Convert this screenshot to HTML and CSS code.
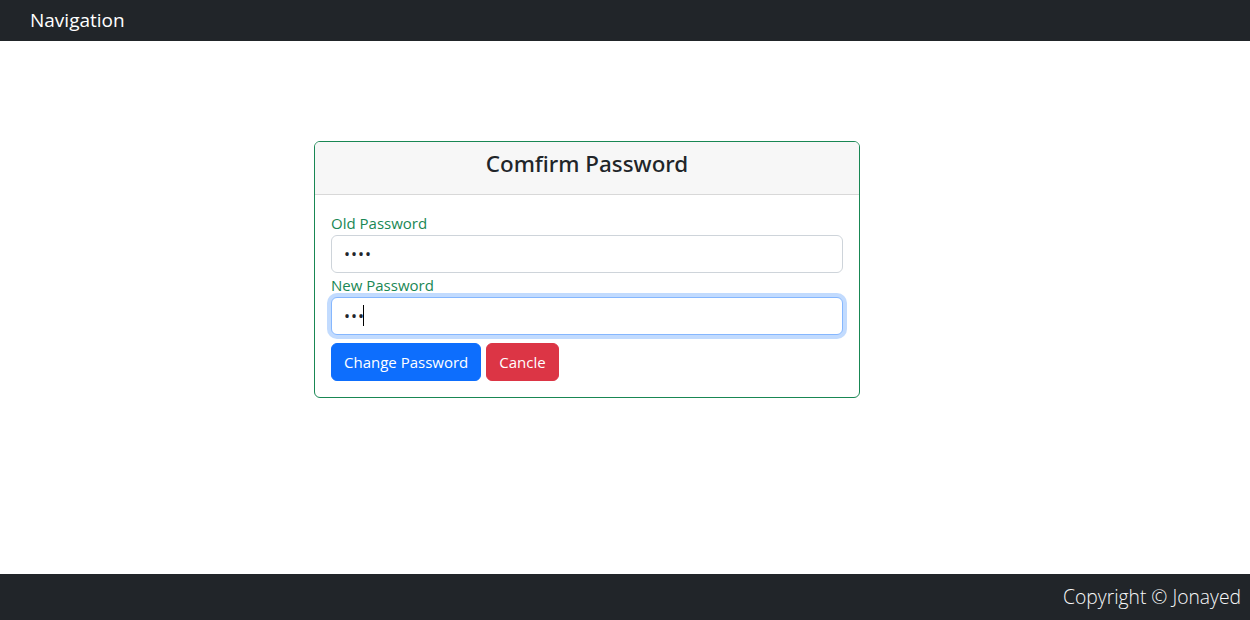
FILE: index.html
```html
<!DOCTYPE html>
<html lang="en">
<head>
<meta charset="utf-8">
<title>Comfirm Password</title>
<link rel="stylesheet" href="styles.css">
</head>
<body>
<div class="page">
  <nav class="navbar">
    <span class="brand">Navigation</span>
  </nav>
  <main class="main">
    <div class="card">
      <div class="card-header">
        <h3 class="card-title">Comfirm Password</h3>
      </div>
      <div class="card-body">
        <label class="label" for="old">Old Password</label>
        <input class="input" id="old" type="password" value="1234">
        <label class="label" for="new">New Password</label>
        <div class="field">
          <input class="input input-focus" id="new" type="password" value="123">
          <span class="caret"></span>
        </div>
        <div class="actions">
          <button class="btn btn-primary" type="button">Change Password</button>
          <button class="btn btn-danger" type="button">Cancle</button>
        </div>
      </div>
    </div>
  </main>
  <footer class="footer">
    <span class="copy">Copyright © Jonayed</span>
  </footer>
</div>
</body>
</html>
```

FILE: styles.css
```css
* { box-sizing: border-box; }
html, body { margin: 0; padding: 0; }
body {
  font-family: "Open Sans", "Noto Sans", "Liberation Sans", sans-serif;
  font-size: 16px;
  line-height: 1.5;
  color: #212529;
  background: #fff;
}
.page {
  display: flex;
  flex-direction: column;
  height: 620px;
}
.navbar {
  background: #212529;
  height: 41px;
  display: flex;
  align-items: center;
  padding-left: 30px;
  flex: none;
}
.brand {
  color: #fff;
  font-size: 19px;
  line-height: 1;
}
.main {
  flex: 1;
  padding-top: 100px;
  padding-left: 314px;
}
.card {
  width: 546px;
  border: 1px solid #198754;
  border-radius: 6px;
  overflow: hidden;
}
.card-header {
  background: #f7f7f7;
  border-bottom: 1px solid #d8d8d8;
  padding: 8px 16px;
  text-align: center;
}
.card-title {
  margin: 0 0 8px;
  font-family: "Noto Sans", "Open Sans", sans-serif;
  font-size: 22.4px;
  font-weight: 500;
  line-height: 28px;
  color: #212529;
}
.card-body {
  padding: 16px;
  display: flex;
  flex-direction: column;
}
.label {
  color: #198754;
  font-size: 15px;
  line-height: 24px;
}
.field {
  position: relative;
}
.input {
  display: block;
  width: 100%;
  height: 38px;
  padding: 6px 12px;
  font-family: inherit;
  font-size: 16px;
  color: #212529;
  border: 1px solid #ced4da;
  border-radius: 6px;
  background: #fff;
  outline: none;
  letter-spacing: 1px;
}
.input-focus {
  border-color: #86b7fe;
  box-shadow: 0 0 0 4px rgba(13, 110, 253, 0.25);
}
.caret {
  position: absolute;
  left: 32px;
  top: 8px;
  width: 1px;
  height: 21px;
  background: #000;
}
.actions {
  display: flex;
  gap: 5px;
  margin-top: 8px;
}
.btn {
  height: 38px;
  padding: 6px 12px;
  font-family: inherit;
  font-size: 15px;
  line-height: 24px;
  color: #fff;
  border: 1px solid transparent;
  border-radius: 6px;
  cursor: pointer;
}
.btn-primary { background: #0d6efd; border-color: #0d6efd; }
.btn-danger { background: #dc3545; border-color: #dc3545; }
.footer {
  background: #212529;
  height: 46px;
  flex: none;
  display: flex;
  align-items: center;
  justify-content: flex-end;
  padding-right: 9px;
}
.copy {
  color: #f8f9fa;
  font-size: 19.3px;
  font-weight: 300;
}
```
